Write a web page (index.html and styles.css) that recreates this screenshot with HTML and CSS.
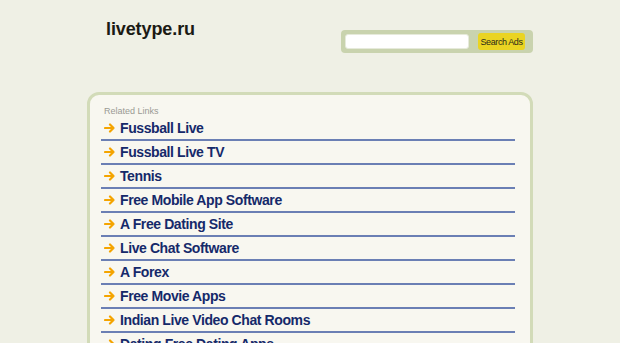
FILE: index.html
```html
<!DOCTYPE html>
<html>
<head>
<meta charset="utf-8">
<link rel="stylesheet" href="styles.css">
</head>
<body>
<div class="page">
  <header class="header">
    <div class="logo">livetype.ru</div>
    <form class="search">
      <input class="search-input" type="text">
      <button class="search-btn" type="button">Search Ads</button>
    </form>
  </header>
  <main class="box">
    <div class="related">Related Links</div>
    <ul class="links">
      <li class="link"><svg class="arrow" viewBox="0 0 12 10" width="12" height="10"><path d="M1 5h8.5M6 1.5 9.5 5 6 8.5" fill="none" stroke="#f4a400" stroke-width="2.2" stroke-linecap="round" stroke-linejoin="round"/></svg><span>Fussball Live</span></li>
      <li class="link"><svg class="arrow" viewBox="0 0 12 10" width="12" height="10"><path d="M1 5h8.5M6 1.5 9.5 5 6 8.5" fill="none" stroke="#f4a400" stroke-width="2.2" stroke-linecap="round" stroke-linejoin="round"/></svg><span>Fussball Live TV</span></li>
      <li class="link"><svg class="arrow" viewBox="0 0 12 10" width="12" height="10"><path d="M1 5h8.5M6 1.5 9.5 5 6 8.5" fill="none" stroke="#f4a400" stroke-width="2.2" stroke-linecap="round" stroke-linejoin="round"/></svg><span>Tennis</span></li>
      <li class="link"><svg class="arrow" viewBox="0 0 12 10" width="12" height="10"><path d="M1 5h8.5M6 1.5 9.5 5 6 8.5" fill="none" stroke="#f4a400" stroke-width="2.2" stroke-linecap="round" stroke-linejoin="round"/></svg><span>Free Mobile App Software</span></li>
      <li class="link"><svg class="arrow" viewBox="0 0 12 10" width="12" height="10"><path d="M1 5h8.5M6 1.5 9.5 5 6 8.5" fill="none" stroke="#f4a400" stroke-width="2.2" stroke-linecap="round" stroke-linejoin="round"/></svg><span>A Free Dating Site</span></li>
      <li class="link"><svg class="arrow" viewBox="0 0 12 10" width="12" height="10"><path d="M1 5h8.5M6 1.5 9.5 5 6 8.5" fill="none" stroke="#f4a400" stroke-width="2.2" stroke-linecap="round" stroke-linejoin="round"/></svg><span>Live Chat Software</span></li>
      <li class="link"><svg class="arrow" viewBox="0 0 12 10" width="12" height="10"><path d="M1 5h8.5M6 1.5 9.5 5 6 8.5" fill="none" stroke="#f4a400" stroke-width="2.2" stroke-linecap="round" stroke-linejoin="round"/></svg><span>A Forex</span></li>
      <li class="link"><svg class="arrow" viewBox="0 0 12 10" width="12" height="10"><path d="M1 5h8.5M6 1.5 9.5 5 6 8.5" fill="none" stroke="#f4a400" stroke-width="2.2" stroke-linecap="round" stroke-linejoin="round"/></svg><span>Free Movie Apps</span></li>
      <li class="link"><svg class="arrow" viewBox="0 0 12 10" width="12" height="10"><path d="M1 5h8.5M6 1.5 9.5 5 6 8.5" fill="none" stroke="#f4a400" stroke-width="2.2" stroke-linecap="round" stroke-linejoin="round"/></svg><span>Indian Live Video Chat Rooms</span></li>
      <li class="link"><svg class="arrow" viewBox="0 0 12 10" width="12" height="10"><path d="M1 5h8.5M6 1.5 9.5 5 6 8.5" fill="none" stroke="#f4a400" stroke-width="2.2" stroke-linecap="round" stroke-linejoin="round"/></svg><span>Dating Free Dating Apps</span></li>
    </ul>
  </main>
</div>
</body>
</html>
```
FILE: styles.css
```css
html, body {
  margin: 0;
  padding: 0;
  background: #eff0e5;
  font-family: "Liberation Sans", Arial, sans-serif;
  height: 343px;
  overflow: hidden;
}
.page {
  width: 446px;
  margin: 0 auto;
}
.header {
  display: flex;
  justify-content: space-between;
  align-items: flex-start;
  height: 92px;
}
.logo {
  margin: 19px 0 0 19px;
  font-size: 18px;
  line-height: 20px;
  font-weight: bold;
  letter-spacing: -0.1px;
  color: #1b1a14;
}
.search {
  margin: 30px 0 0 0;
  width: 192px;
  height: 23px;
  box-sizing: border-box;
  background: #c9d3ae;
  border-radius: 4px;
  display: flex;
  align-items: center;
  padding: 0 8px 0 4px;
  justify-content: space-between;
}
.search-input {
  width: 124px;
  height: 15px;
  box-sizing: border-box;
  border: 1px solid #e6eadb;
  border-radius: 3px;
  background: #fff;
  padding: 0;
  margin: 0;
}
.search-btn {
  width: 47px;
  height: 17px;
  border: 0;
  border-radius: 3px;
  background: #ead422;
  font-family: "Liberation Sans", Arial, sans-serif;
  font-size: 9px;
  letter-spacing: -0.4px;
  color: #2a2a1a;
  padding: 0;
  margin: 0;
}
.box {
  border: 3px solid #d2dbb8;
  border-radius: 12px;
  background: #f8f7f0;
  padding: 10px 15px 0 11px;
  height: 400px;
}
.related {
  font-size: 9px;
  line-height: 12px;
  color: #9a9a94;
  padding-left: 3px;
}
.links {
  list-style: none;
  margin: 0;
  padding: 0;
}
.link {
  display: flex;
  align-items: center;
  height: 22px;
  border-bottom: 2px solid #6b7fb4;
  padding-left: 3px;
  font-size: 14px;
  font-weight: bold;
  letter-spacing: -0.4px;
  color: #15296a;
}
.arrow {
  width: 12px;
  height: 10px;
  margin-right: 4px;
  flex: none;
}
```
